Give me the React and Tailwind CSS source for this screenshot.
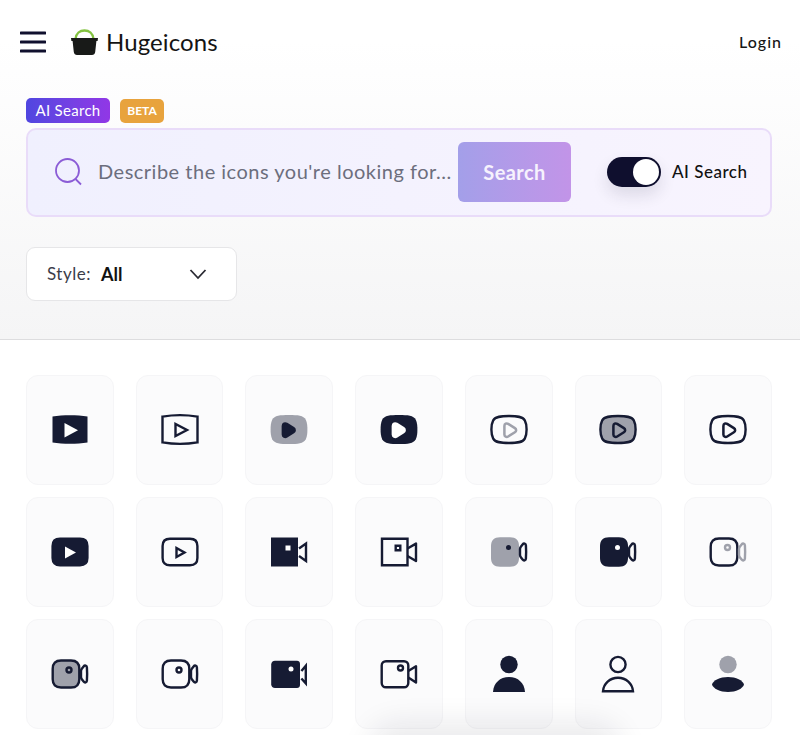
const DARK = '#161b33'
const GRAY = '#9fa1ab'
const SW = 2.4

const wide = 'M4.5 8.6C15 6.8 29 6.8 39.5 8.6V34.4C29 36.2 15 36.2 4.5 34.4Z'
const squircle = 'M22 8C30 8 35.6 8.4 37.8 12.4C39.3 15.2 39.6 18 39.6 21.5C39.6 25 39.3 27.8 37.8 30.6C35.6 34.6 30 35 22 35C14 35 8.4 34.6 6.2 30.6C4.7 27.8 4.4 25 4.4 21.5C4.4 18 4.7 15.2 6.2 12.4C8.4 8.4 14 8 22 8Z'
const squircleFill = 'M22 7C31 7 36.4 7.4 38.8 11.8C40.2 14.8 40.4 18 40.4 21.5C40.4 25 40.2 28.2 38.8 31.2C36.4 35.6 31 36 22 36C13 36 7.6 35.6 5.2 31.2C3.8 28.2 3.6 25 3.6 21.5C3.6 18 3.8 14.8 5.2 11.8C7.6 7.4 13 7 22 7Z'
const tube = 'M12 8.8H32C36.8 8.8 39.4 11.4 39.4 16V28C39.4 32.6 36.8 35.2 32 35.2H12C7.2 35.2 4.6 32.6 4.6 28V16C4.6 11.4 7.2 8.8 12 8.8Z'
const roundPlay = 'M18 17.5C18 15.5 20 14.6 21.6 15.6L28 19.6C29.6 20.6 29.6 22.6 28 23.6L21.6 27.6C20 28.6 18 27.6 18 25.6Z'
const camFill = 'M13 7.3H23C29 7.3 32 10.3 32 16.3V27.7C32 33.7 29 36.7 23 36.7H13C7 36.7 4 33.7 4 27.7V16.3C4 10.3 7 7.3 13 7.3Z'
const camLine = 'M13 8.5H23C28.5 8.5 31.3 11.3 31.3 16.8V27.2C31.3 32.7 28.5 35.5 23 35.5H13C7.5 35.5 4.7 32.7 4.7 27.2V16.8C4.7 11.3 7.5 8.5 13 8.5Z'
const camLens = 'M33 19C33 18 33.4 17.2 34.2 16.2L35.6 14.4C36.8 12.9 38.8 13.5 38.9 15.4C39.2 19.5 39.2 24.5 38.9 28.6C38.8 30.5 36.8 31.1 35.6 29.6L34.2 27.8C33.4 26.8 33 26 33 25Z'

function Wide({ solid }) {
  return solid ? (
    <>
      <path d={wide} fill={DARK} />
      <path d="M16.5 15V29.5L30 22.2Z" fill="#fff" />
    </>
  ) : (
    <>
      <path d={wide} fill="none" stroke={DARK} strokeWidth={SW} />
      <path d="M17.5 16V28L29 22Z" fill="none" stroke={DARK} strokeWidth={SW} />
    </>
  )
}

function Play({ color, fill = 'none', x = -1.5 }) {
  return (
    <path d={roundPlay} fill={fill} stroke={color} strokeWidth={SW} strokeLinejoin="round" transform={`translate(${x} -0.5) scale(1.05)`} />
  )
}

function Person({ variant }) {
  if (variant === 'solid') {
    return (
      <>
        <circle cx="22" cy="12.5" r="8.7" fill={DARK} />
        <path d="M6 40C6.5 31 13 25 22 25C31 25 37.5 31 38 40Z" fill={DARK} />
      </>
    )
  }
  if (variant === 'line') {
    return (
      <>
        <circle cx="22" cy="12.5" r="7.6" fill="none" stroke={DARK} strokeWidth={SW} />
        <path d="M7 39.3C7.5 31.5 14 25.7 22 25.7C30 25.7 36.5 31.5 37 39.3Z" fill="none" stroke={DARK} strokeWidth={SW} />
      </>
    )
  }
  return (
    <>
      <circle cx="22" cy="12.5" r="8.7" fill={GRAY} />
      <path d="M6 32.5C7 28.5 14 25 22 25C30 25 37 28.5 38 32.5C37 36.5 30 40 22 40C14 40 7 36.5 6 32.5Z" fill={DARK} />
    </>
  )
}

const icons = [
  <Wide solid />,
  <Wide />,
  <>
    <path d={squircleFill} fill={GRAY} />
    <Play color={DARK} fill={DARK} x={-3} />
  </>,
  <>
    <path d={squircleFill} fill={DARK} />
    <Play color="#fff" fill="#fff" x={-3} />
  </>,
  <>
    <path d={squircle} fill="none" stroke={DARK} strokeWidth={SW} />
    <Play color={GRAY} />
  </>,
  <>
    <path d={squircle} fill={GRAY} stroke={DARK} strokeWidth={SW} />
    <Play color={DARK} />
  </>,
  <>
    <path d={squircle} fill="none" stroke={DARK} strokeWidth={SW} />
    <Play color={DARK} />
  </>,

  <>
    <path d={tube} fill={DARK} stroke={DARK} strokeWidth={SW} />
    <path d="M17 16.5V28.5L28 22.5Z" fill="#fff" />
  </>,
  <>
    <path d={tube} fill="none" stroke={DARK} strokeWidth={SW} />
    <path d="M18.5 18V27L26.5 22.5Z" fill="none" stroke={DARK} strokeWidth={SW} />
  </>,
  <>
    <path d="M4 7.5H31V36.5H4Z" fill={DARK} />
    <path d="M18.5 15.5H23.5V20.5H18.5Z" fill="#fff" />
    <path d="M32 18.5L39 13.6V31L32 26" fill="none" stroke={DARK} strokeWidth={SW} />
  </>,
  <>
    <path d="M5 8.7H30.5V35.3H5Z" fill="none" stroke={DARK} strokeWidth={SW} />
    <path d="M18.7 15.7H23.3V20.3H18.7Z" fill="none" stroke={DARK} strokeWidth={SW} />
    <path d="M30.5 18.5L39 13.6V31L30.5 26" fill="none" stroke={DARK} strokeWidth={SW} strokeLinejoin="round" />
  </>,
  <>
    <path d={camFill} fill={GRAY} />
    <circle cx="21.5" cy="17.5" r="2.5" fill={DARK} />
    <path d={camLens} fill="none" stroke={DARK} strokeWidth={SW} strokeLinejoin="round" />
  </>,
  <>
    <path d={camFill} fill={DARK} />
    <circle cx="21.5" cy="17.5" r="2.5" fill="#fff" />
    <path d={camLens} fill="none" stroke={DARK} strokeWidth={SW} strokeLinejoin="round" />
  </>,
  <>
    <path d={camLine} fill="none" stroke={DARK} strokeWidth={SW} />
    <circle cx="21.5" cy="17.5" r="2.5" fill="none" stroke={GRAY} strokeWidth={SW} />
    <path d={camLens} fill="none" stroke={GRAY} strokeWidth={SW} strokeLinejoin="round" />
  </>,

  <>
    <path d={camLine} fill={GRAY} stroke={DARK} strokeWidth={SW} />
    <circle cx="21" cy="18" r="2.5" fill="none" stroke={DARK} strokeWidth={SW} />
    <path d={camLens} fill="none" stroke={DARK} strokeWidth={SW} strokeLinejoin="round" />
  </>,
  <>
    <path d={camLine} fill="none" stroke={DARK} strokeWidth={SW} />
    <circle cx="21" cy="18" r="2.5" fill="none" stroke={DARK} strokeWidth={SW} />
    <path d={camLens} fill="none" stroke={DARK} strokeWidth={SW} strokeLinejoin="round" />
  </>,
  <>
    <path d="M8 8.7H30C31.7 8.7 33 10 33 11.7V33C33 34.7 31.7 36 30 36H8C5.8 36 4.2 34.4 4.2 32.2V12.5C4.2 10.3 5.8 8.7 8 8.7Z" fill={DARK} />
    <circle cx="24" cy="17" r="2.5" fill="#fff" />
    <path d="M34.4 19L38.8 13.8V31.4L34.4 26.5" fill="none" stroke={DARK} strokeWidth={SW} />
  </>,
  <>
    <path d="M9 9.2H27C29.5 9.2 31.3 11 31.3 13.5V31C31.3 33.5 29.5 35.3 27 35.3H9C6.5 35.3 4.7 33.5 4.7 31V13.5C4.7 11 6.5 9.2 9 9.2Z" fill="none" stroke={DARK} strokeWidth={SW} />
    <circle cx="23.5" cy="16" r="2.5" fill="none" stroke={DARK} strokeWidth={SW} />
    <path d="M31.3 19L39 14.3V30.5L31.3 25.5" fill="none" stroke={DARK} strokeWidth={SW} strokeLinejoin="round" />
  </>,
  <Person variant="solid" />,
  <Person variant="line" />,
  <Person variant="duo" />,
]

function Logo() {
  return (
    <svg width="27" height="27" viewBox="0 0 27 27" className="shrink-0">
      <path d="M4.5 10C5 4.5 9 1.5 13.5 1.5C18 1.5 22 4.5 22.5 10" fill="none" stroke="#84c341" strokeWidth="2.4" />
      <path d="M0 9H27L26.6 12H25.4L24.2 23C24 25 22.6 26 21 26H6C4.4 26 3 25 2.8 23L1.6 12H0.4Z" fill="#181a18" />
    </svg>
  )
}

export default function App() {
  return (
    <div className="relative h-[735px] w-[800px] overflow-hidden bg-white font-['Lato',sans-serif] text-[#10102e]">
      <div className="border-b border-[#dddddf] bg-gradient-to-b from-white from-[12%] to-[#f5f5f6] pb-[38px]">
        <nav className="flex h-[84px] items-center pl-5 pr-[18px]">
          <svg width="26" height="22" viewBox="0 0 26 22" className="shrink-0">
            <path d="M1 2H25M1 11H25M1 20H25" stroke="#10102e" strokeWidth="3" strokeLinecap="round" />
          </svg>
          <div className="ml-[25px]">
            <Logo />
          </div>
          <span className="ml-2 text-[24px] tracking-[0.1px] text-[#141414]">Hugeicons</span>
          <span className="ml-auto text-base font-medium tracking-[1px] text-[#161616]">Login</span>
        </nav>

        <div className="pl-[26px] pr-[28px]">
          <div className="mt-[14px] flex items-center gap-[10px]">
            <span className="flex h-[25px] w-[84px] items-center justify-center rounded-[5px] bg-gradient-to-r from-[#4f46e0] to-[#9137e6] text-[15px] tracking-[0.3px] text-white">
              AI Search
            </span>
            <span className="flex h-[24px] w-[44px] items-center justify-center rounded-[5px] bg-[#e8a33d] text-xs font-bold text-white">
              BETA
            </span>
          </div>

          <div className="mt-[5px] flex h-[89px] items-center rounded-[10px] border-2 border-[#e9dcf9] bg-gradient-to-r from-[#f0f0fe] to-[#f8f4fe] pb-px pl-[26px] pr-6">
            <svg width="28" height="28" viewBox="0 0 28 28" className="shrink-0">
              <circle cx="13.5" cy="12.5" r="11.5" fill="none" stroke="#8b5cd6" strokeWidth="1.8" />
              <path d="M21.5 21L27 26.5" stroke="#8b5cd6" strokeWidth="1.8" />
            </svg>
            <span className="mb-0.5 ml-[16px] w-[360px] shrink-0 whitespace-nowrap text-[20px] tracking-[0.5px] text-[#6c6e7d]">
              Describe the icons you're looking for...
            </span>
            <button className="flex h-[60px] w-[113px] shrink-0 items-center justify-center rounded-md bg-gradient-to-r from-[#a39fe9] to-[#c294e8] text-[20px] font-bold tracking-[0.4px] text-[#f6f2fd]">
              Search
            </button>
            <div className="ml-9 flex h-[30px] w-[54px] shrink-0 items-center justify-end rounded-full bg-[#0f0f2e] pr-0.5 shadow-[0_8px_16px_rgba(30,30,60,0.12)]">
              <span className="h-[26px] w-[26px] rounded-full bg-white" />
            </div>
            <span className="ml-[11px] whitespace-nowrap text-[17px] font-medium tracking-[0.5px] text-[#111]">AI Search</span>
          </div>

          <div className="mt-[30px] flex h-[54px] w-[211px] items-center rounded-[9px] border border-[#e6e6e8] bg-white pl-5 pr-[29px]">
            <span className="text-[17px] tracking-[0.5px] text-[#3b3d4a]">Style:</span>
            <span className="ml-[10px] text-[18px] font-bold text-[#111]">All</span>
            <svg width="18" height="12" viewBox="0 0 18 12" className="ml-auto">
              <path d="M1.5 2L9 10L16.5 2" fill="none" stroke="#2a2a33" strokeWidth="1.8" />
            </svg>
          </div>
        </div>
      </div>

      <div className="grid grid-cols-7 gap-x-[22px] gap-y-3 pl-[26px] pr-[28px] pt-[35px]">
        {icons.map((icon, i) => (
          <div key={i} className="flex h-[110px] items-center justify-center rounded-xl border border-[#f5f5f7] bg-[#fbfbfc]">
            <svg width="44" height="44" viewBox="0 0 44 44">
              {icon}
            </svg>
          </div>
        ))}
      </div>

      <div className="absolute bottom-[-34px] left-[380px] h-[34px] w-[230px] rounded-full shadow-[0_0_30px_12px_rgba(20,20,40,0.09)]" />
    </div>
  )
}
